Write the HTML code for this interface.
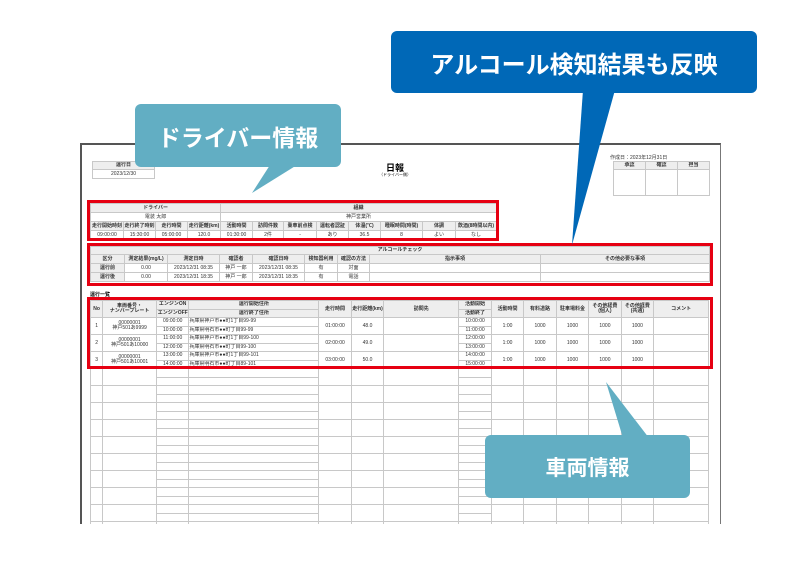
<!DOCTYPE html>
<html><head><meta charset="utf-8"><style>
*{margin:0;padding:0;box-sizing:border-box}
body{width:800px;height:566px;background:#fff;position:relative;overflow:hidden;font-family:"Liberation Sans","Noto Sans CJK JP",sans-serif}
.abs{position:absolute}
table{border-collapse:collapse;table-layout:fixed;position:absolute}
td{border:1px solid #c8c8c8;font-size:5px;color:#333;text-align:center;overflow:hidden;white-space:nowrap;line-height:1;padding:0}
.h td,td.h{background:#eeeeee;font-weight:bold}
.v td{height:8.5px}
.red{position:absolute;border:3px solid #e60012}
.bub{position:absolute;color:#fff;font-weight:bold;display:flex;align-items:center;justify-content:center;border-radius:6px;font-family:"Noto Sans CJK JP",sans-serif}
</style></head><body>
<div class="abs" style="left:80px;top:143px;width:641px;height:381px;border-top:2px solid #555;border-left:2px solid #555;border-right:1px solid #777"></div>
<div class="abs" style="left:610px;top:154px;font-size:5px;color:#333">作成日：2023年12月31日</div>
<div class="abs" style="left:370px;top:161px;width:50px;text-align:center;font-size:9px;font-weight:bold">日報</div>
<div class="abs" style="left:370px;top:172px;width:50px;text-align:center;font-size:4px">（ドライバー側）</div>
<table style="left:92px;top:161px;width:63px"><tr class="h"><td style="height:8px">運行日</td></tr><tr><td style="height:9px">2023/12/30</td></tr></table>
<table style="left:613px;top:161px;width:97px"><tr class="h"><td style="height:8px">承認</td><td>確認</td><td>担当</td></tr><tr><td style="height:26px"></td><td></td><td></td></tr></table>

<table style="left:90px;top:203px;width:406px">
<colgroup><col style="width:33px"><col style="width:32px"><col style="width:32px"><col style="width:33px"><col style="width:32px"><col style="width:31px"><col style="width:33px"><col style="width:32px"><col style="width:32px"><col style="width:42px"><col style="width:33px"><col style="width:41px"></colgroup>
<tr class="h"><td colspan="4" style="height:9px">ドライバー</td><td colspan="8">組織</td></tr>
<tr><td colspan="4" style="height:9px">電装 太郎</td><td colspan="8">神戸営業所</td></tr>
<tr class="h"><td style="height:9px">走行開始時刻</td><td>走行終了時刻</td><td>走行時間</td><td>走行距離(km)</td><td>活動時間</td><td>訪問件数</td><td>乗車前点検</td><td>運転者認証</td><td>体温(℃)</td><td>睡眠時間(時間)</td><td>体調</td><td>飲酒(8時間以内)</td></tr>
<tr><td style="height:9px">09:00:00</td><td>15:30:00</td><td>05:00:00</td><td>120.0</td><td>01:30:00</td><td>2件</td><td>-</td><td>あり</td><td>36.5</td><td>8</td><td>よい</td><td>なし</td></tr>
</table>
<div class="red" style="left:87px;top:200px;width:412px;height:41px"></div>

<table style="left:90px;top:246px;width:619px">
<colgroup><col style="width:34px"><col style="width:43px"><col style="width:52px"><col style="width:33px"><col style="width:52px"><col style="width:33px"><col style="width:32px"><col style="width:171px"><col style="width:169px"></colgroup>
<tr class="h"><td colspan="9" style="height:8px">アルコールチェック</td></tr>
<tr class="h"><td style="height:9px">区分</td><td>測定結果(mg/L)</td><td>測定日時</td><td>確認者</td><td>確認日時</td><td>検知器利用</td><td>確認の方法</td><td>指示事項</td><td>その他必要な事項</td></tr>
<tr><td class="h" style="height:9px">運行前</td><td>0.00</td><td>2023/12/31 08:35</td><td>神戸 一郎</td><td>2023/12/31 08:35</td><td>有</td><td>対面</td><td></td><td></td></tr>
<tr><td class="h" style="height:9px">運行後</td><td>0.00</td><td>2023/12/31 18:35</td><td>神戸 一郎</td><td>2023/12/31 18:35</td><td>有</td><td>電話</td><td></td><td></td></tr>
</table>
<div class="red" style="left:87px;top:243px;width:626px;height:43px"></div>

<div class="abs" style="left:90px;top:291px;font-size:5px;font-weight:bold">運行一覧</div>
<table style="left:90px;top:300px;width:619px">
<colgroup><col style="width:12px"><col style="width:53px"><col style="width:32px"><col style="width:128px"><col style="width:32px"><col style="width:32px"><col style="width:74px"><col style="width:32px"><col style="width:32px"><col style="width:32px"><col style="width:32px"><col style="width:32px"><col style="width:32px"><col style="width:54px"></colgroup>
<tr class="h v"><td rowspan="2">No</td><td rowspan="2">車両番号・<br>ナンバープレート</td><td>エンジンON</td><td>運行開始住所</td><td rowspan="2">走行時間</td><td rowspan="2">走行距離(km)</td><td rowspan="2">訪問先</td><td>活動開始</td><td rowspan="2">活動時間</td><td rowspan="2">有料道路</td><td rowspan="2">駐車場料金</td><td rowspan="2">その他経費<br>(個人)</td><td rowspan="2">その他経費<br>(共通)</td><td rowspan="2">コメント</td></tr>
<tr class="h v"><td>エンジンOFF</td><td>運行終了住所</td><td>活動終了</td></tr>
<tr class="v"><td rowspan="2">1</td><td rowspan="2">00000001<br>神戸501あ9999</td><td>09:00:00</td><td style="text-align:left">兵庫県神戸市●●町1丁目99-99</td><td rowspan="2">01:00:00</td><td rowspan="2">48.0</td><td rowspan="2"></td><td>10:00:00</td><td rowspan="2">1:00</td><td rowspan="2">1000</td><td rowspan="2">1000</td><td rowspan="2">1000</td><td rowspan="2">1000</td><td rowspan="2"></td></tr>
<tr class="v"><td>10:00:00</td><td style="text-align:left">兵庫県明石市●●町丁目99-99</td><td>11:00:00</td></tr>
<tr class="v"><td rowspan="2">2</td><td rowspan="2">00000001<br>神戸501あ10000</td><td>11:00:00</td><td style="text-align:left">兵庫県神戸市●●町1丁目99-100</td><td rowspan="2">02:00:00</td><td rowspan="2">49.0</td><td rowspan="2"></td><td>12:00:00</td><td rowspan="2">1:00</td><td rowspan="2">1000</td><td rowspan="2">1000</td><td rowspan="2">1000</td><td rowspan="2">1000</td><td rowspan="2"></td></tr>
<tr class="v"><td>12:00:00</td><td style="text-align:left">兵庫県明石市●●町丁目99-100</td><td>13:00:00</td></tr>
<tr class="v"><td rowspan="2">3</td><td rowspan="2">00000001<br>神戸501あ10001</td><td>13:00:00</td><td style="text-align:left">兵庫県神戸市●●町1丁目99-101</td><td rowspan="2">03:00:00</td><td rowspan="2">50.0</td><td rowspan="2"></td><td>14:00:00</td><td rowspan="2">1:00</td><td rowspan="2">1000</td><td rowspan="2">1000</td><td rowspan="2">1000</td><td rowspan="2">1000</td><td rowspan="2"></td></tr>
<tr class="v"><td>14:00:00</td><td style="text-align:left">兵庫県明石市●●町丁目89-101</td><td>15:00:00</td></tr>
<tr class="v"><td rowspan="2"></td><td rowspan="2"></td><td></td><td></td><td rowspan="2"></td><td rowspan="2"></td><td rowspan="2"></td><td></td><td rowspan="2"></td><td rowspan="2"></td><td rowspan="2"></td><td rowspan="2"></td><td rowspan="2"></td><td rowspan="2"></td></tr><tr class="v"><td></td><td></td><td></td></tr>
<tr class="v"><td rowspan="2"></td><td rowspan="2"></td><td></td><td></td><td rowspan="2"></td><td rowspan="2"></td><td rowspan="2"></td><td></td><td rowspan="2"></td><td rowspan="2"></td><td rowspan="2"></td><td rowspan="2"></td><td rowspan="2"></td><td rowspan="2"></td></tr><tr class="v"><td></td><td></td><td></td></tr>
<tr class="v"><td rowspan="2"></td><td rowspan="2"></td><td></td><td></td><td rowspan="2"></td><td rowspan="2"></td><td rowspan="2"></td><td></td><td rowspan="2"></td><td rowspan="2"></td><td rowspan="2"></td><td rowspan="2"></td><td rowspan="2"></td><td rowspan="2"></td></tr><tr class="v"><td></td><td></td><td></td></tr>
<tr class="v"><td rowspan="2"></td><td rowspan="2"></td><td></td><td></td><td rowspan="2"></td><td rowspan="2"></td><td rowspan="2"></td><td></td><td rowspan="2"></td><td rowspan="2"></td><td rowspan="2"></td><td rowspan="2"></td><td rowspan="2"></td><td rowspan="2"></td></tr><tr class="v"><td></td><td></td><td></td></tr>
<tr class="v"><td rowspan="2"></td><td rowspan="2"></td><td></td><td></td><td rowspan="2"></td><td rowspan="2"></td><td rowspan="2"></td><td></td><td rowspan="2"></td><td rowspan="2"></td><td rowspan="2"></td><td rowspan="2"></td><td rowspan="2"></td><td rowspan="2"></td></tr><tr class="v"><td></td><td></td><td></td></tr>
<tr class="v"><td rowspan="2"></td><td rowspan="2"></td><td></td><td></td><td rowspan="2"></td><td rowspan="2"></td><td rowspan="2"></td><td></td><td rowspan="2"></td><td rowspan="2"></td><td rowspan="2"></td><td rowspan="2"></td><td rowspan="2"></td><td rowspan="2"></td></tr><tr class="v"><td></td><td></td><td></td></tr>
<tr class="v"><td rowspan="2"></td><td rowspan="2"></td><td></td><td></td><td rowspan="2"></td><td rowspan="2"></td><td rowspan="2"></td><td></td><td rowspan="2"></td><td rowspan="2"></td><td rowspan="2"></td><td rowspan="2"></td><td rowspan="2"></td><td rowspan="2"></td></tr><tr class="v"><td></td><td></td><td></td></tr>
<tr class="v"><td rowspan="2"></td><td rowspan="2"></td><td></td><td></td><td rowspan="2"></td><td rowspan="2"></td><td rowspan="2"></td><td></td><td rowspan="2"></td><td rowspan="2"></td><td rowspan="2"></td><td rowspan="2"></td><td rowspan="2"></td><td rowspan="2"></td></tr><tr class="v"><td></td><td></td><td></td></tr>
<tr class="v"><td rowspan="2"></td><td rowspan="2"></td><td></td><td></td><td rowspan="2"></td><td rowspan="2"></td><td rowspan="2"></td><td></td><td rowspan="2"></td><td rowspan="2"></td><td rowspan="2"></td><td rowspan="2"></td><td rowspan="2"></td><td rowspan="2"></td></tr><tr class="v"><td></td><td></td><td></td></tr>
<tr class="v"><td rowspan="2"></td><td rowspan="2"></td><td></td><td></td><td rowspan="2"></td><td rowspan="2"></td><td rowspan="2"></td><td></td><td rowspan="2"></td><td rowspan="2"></td><td rowspan="2"></td><td rowspan="2"></td><td rowspan="2"></td><td rowspan="2"></td></tr><tr class="v"><td></td><td></td><td></td></tr>
<tr class="v"><td rowspan="2"></td><td rowspan="2"></td><td></td><td></td><td rowspan="2"></td><td rowspan="2"></td><td rowspan="2"></td><td></td><td rowspan="2"></td><td rowspan="2"></td><td rowspan="2"></td><td rowspan="2"></td><td rowspan="2"></td><td rowspan="2"></td></tr><tr class="v"><td></td><td></td><td></td></tr>
</table>
<div class="abs" style="left:80px;top:524px;width:645px;height:42px;background:#fff"></div>
<div class="red" style="left:87px;top:297px;width:626px;height:72px"></div>

<svg class="abs" style="left:0;top:0" width="800" height="566">
<polygon points="270,165 297,165 252,193" fill="#62aec3"/>
<polygon points="583,90 615,90 572,245" fill="#0068b7"/>
<polygon points="623,438 649,438 606,382" fill="#62aec3"/>
</svg>
<div class="bub" style="left:135px;top:104px;width:206px;height:63px;background:#62aec3;font-size:23px">ドライバー情報</div>
<div class="bub" style="left:391px;top:31px;width:366px;height:62px;background:#0068b7;font-size:24px">アルコール検知結果も反映</div>
<div class="bub" style="left:485px;top:435px;width:205px;height:63px;background:#62aec3;font-size:21px">車両情報</div>
</body></html>
